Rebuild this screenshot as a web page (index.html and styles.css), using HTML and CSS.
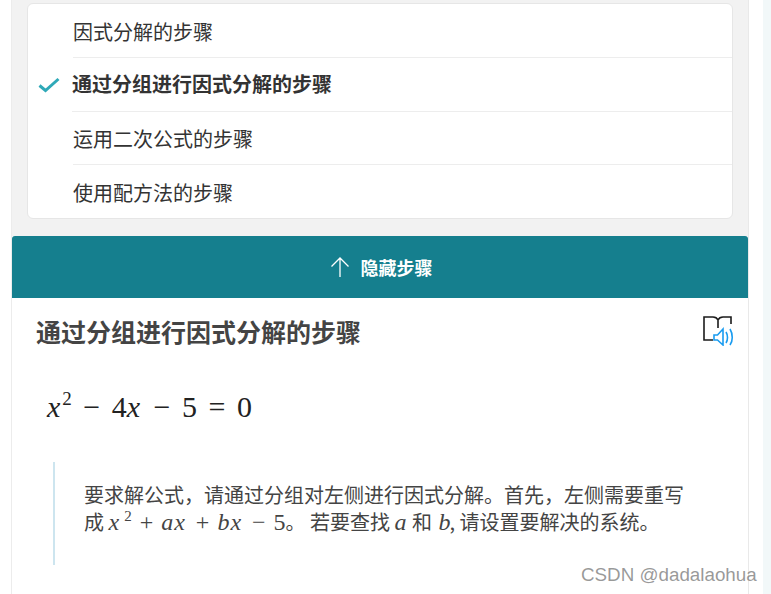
FILE: index.html
```html
<!DOCTYPE html>
<html lang="zh-CN">
<head>
<meta charset="utf-8">
<title>通过分组进行因式分解的步骤</title>
<link rel="stylesheet" href="styles.css">
</head>
<body>
<div class="page">
  <main class="main">
    <section class="panel">
      <ul class="methods">
        <li class="method"><span class="method-text">因式分解的步骤</span></li>
        <li class="method is-active">
          <svg class="check" viewBox="0 0 22 16" aria-hidden="true"><path d="M1.5 8.5 L7.5 13.5 L20.5 2" fill="none" stroke="#2fa9b8" stroke-width="3"/></svg>
          <span class="method-text">通过分组进行因式分解的步骤</span>
        </li>
        <li class="method"><span class="method-text">运用二次公式的步骤</span></li>
        <li class="method"><span class="method-text">使用配方法的步骤</span></li>
      </ul>
    </section>
    <button class="toggle" type="button">
      <svg class="arrow" viewBox="0 0 20 22" aria-hidden="true"><path d="M10 21 V2 M1.5 10.5 L10 2 L18.5 10.5" fill="none" stroke="#fff" stroke-width="1.3"/></svg>
      <span>隐藏步骤</span>
    </button>
    <article class="solution">
      <header class="solution-head">
        <h2 class="solution-title">通过分组进行因式分解的步骤</h2>
        <svg class="reader" viewBox="0 0 32 30" aria-hidden="true">
          <path d="M10 24 H1 V1 H10 C12 1 14 2 15 4 C16 2 18 1 20 1 H28 V8 M15 4 V12" fill="none" stroke="#1b1b1b" stroke-width="1.6"/>
          <path d="M11 19 V24 H14.5 L20 29 V13 L14.5 19 Z" fill="#fff" stroke="#1a9cf0" stroke-width="1.6"/>
          <path d="M23 16 C25 19 25 24 23 27 M27 13 C30 18 30 25 27 29" fill="none" stroke="#1a9cf0" stroke-width="1.6"/>
        </svg>
      </header>
      <p class="equation"><i>x</i><sup>2</sup><span class="op">−</span>4<i>x</i><span class="op">−</span>5<span class="op">=</span>0</p>
      <blockquote class="explain">
        <p>要求解公式，请通过分组对左侧进行因式分解。首先，左侧需要重写成 <span class="math"><i>x</i><sup>2</sup><span class="mop">+</span><i>ax</i><span class="mop">+</span><i>bx</i><span class="mop">−</span>5</span>。 若要查找 <span class="math"><i class="var">a</i></span> 和 <span class="math"><i class="var var-b">b</i></span>, 请设置要解决的系统。</p>
      </blockquote>
    </article>
  </main>
  <aside class="rail"></aside>
</div>
<div class="watermark">CSDN @dadalaohua</div>
</body>
</html>
```
FILE: styles.css
```css
* { box-sizing: border-box; }
html, body { margin: 0; padding: 0; height: 594px; overflow: hidden; background: #fff; }
body { font-family: "Noto Sans CJK SC", "Noto Sans", sans-serif; color: #333; position: relative; }
.page { display: flex; height: 594px; padding-left: 12px; }
.main { width: 737px; flex: none; border-right: 1px solid #e9e9e9; display: flex; flex-direction: column; box-shadow: -1px 0 0 #ececec; }
.panel { height: 236px; background: #f2f2f2; padding: 3px 15px 0; }
.methods { list-style: none; margin: 0; padding: 0; height: 216px; background: #fff; border: 1px solid #e6e6e6; border-radius: 6px; }
.method { height: 53.7px; margin-left: 45px; border-bottom: 1px solid #ededed; display: flex; align-items: center; position: relative; font-size: 20px; color: #333; padding-top: 3px; }
.method:last-child { border-bottom: 0; }
.method-text { line-height: 28px; }
.is-active { height: 54px; font-weight: 700; margin-left: 44px; padding-top: 0; }
.is-active ~ .method { padding-top: 1px; }
.check { position: absolute; left: -34px; top: 19px; width: 22px; height: 16px; }
.toggle { height: 62px; flex: none; border: 0; border-radius: 3px 3px 0 0; background: #157f8e; color: #fff; font: 700 18px "Noto Sans CJK SC", sans-serif; display: flex; align-items: center; justify-content: center; gap: 11px; padding: 0 0 0 2px; width: 736px; }
.arrow { width: 20px; height: 22px; }
.solution { flex: 1; background: #fff; padding: 0 13px 0 24px; }
.solution-head { display: flex; justify-content: space-between; height: 68px; padding-top: 15px; }
.solution-title { margin: 0; font-size: 25px; line-height: 36px; font-weight: 700; color: #444; }
.reader { width: 32px; height: 30px; margin-top: 3px; }
.equation { margin: 0 0 0 11px; height: 96px; padding-top: 19px; font-family: "Liberation Serif", serif; font-size: 30px; line-height: 44px; color: #222; }
.equation i { margin-right: 2px; }
.equation sup { font-size: 19px; line-height: 0; vertical-align: 12px; }
.equation .op { margin: 0 11.5px; }
.explain { margin: 0 0 0 17px; border-left: 2px solid #cde5ef; height: 103px; padding: 19px 40px 0 29px; }
.explain p { margin: 0; font-size: 20px; line-height: 27px; color: #444; }
.math { font-family: "Liberation Serif", serif; font-size: 24px; }
.math i { margin-right: 2px; letter-spacing: 1px; }
.math .var { margin-right: 1px; letter-spacing: 0; }
.math .var-b { margin: 0 -1px 0 2px; }
.math sup { font-size: 15px; line-height: 0; vertical-align: 9px; margin-left: 2px; }
.mop { margin: 0 8px; }
.rail { width: 8px; margin-left: 14px; background: #f2f8f9; flex: none; }
.watermark { position: absolute; left: 581px; top: 564px; font: 18.8px "Liberation Sans", sans-serif; color: rgba(120,120,120,.75); white-space: nowrap; }
```
